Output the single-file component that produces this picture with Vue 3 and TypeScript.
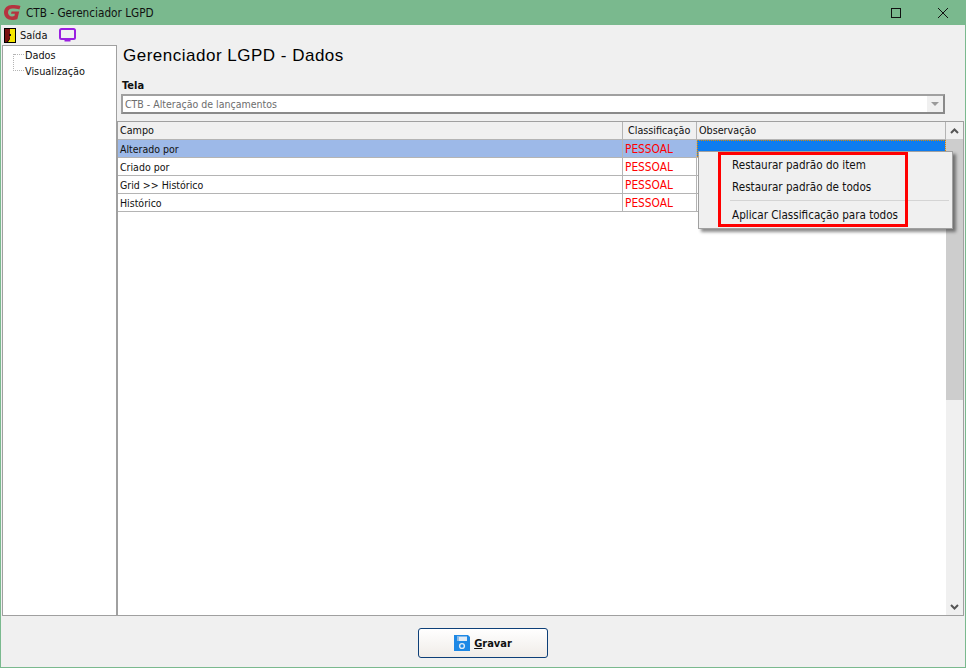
<script setup lang="ts">
const rows = [
  { campo: 'Alterado por', cls: 'PESSOAL', selected: true },
  { campo: 'Criado por', cls: 'PESSOAL', selected: false },
  { campo: 'Grid >> Histórico', cls: 'PESSOAL', selected: false },
  { campo: 'Histórico', cls: 'PESSOAL', selected: false },
]
</script>

<template>
  <div class="window">
    <header class="titlebar">
      <svg class="logo" width="17" height="15" viewBox="0 0 17 15">
        <path d="M16.5 1 C14.5 .4 11 0 8 0 C3.4 0 0 3 0 7.5 C0 12 3.4 15 8 15 C10 15 12 14.6 13.4 14 L15.2 6.4 H7.6 L7 8.8 H10.9 L10.4 11 C9.6 11.3 8.9 11.4 8.2 11.4 C5.6 11.4 4 9.9 4 7.5 C4 5.1 5.8 3.6 8.4 3.6 C10.6 3.6 13.4 4 15.4 4.6 Z" fill="#b5343f" />
      </svg>
      <span class="title">CTB - Gerenciador LGPD</span>
      <div class="winbtns">
        <svg width="12" height="12" viewBox="0 0 12 12"><rect x="1.5" y="1.5" width="9" height="9" fill="none" stroke="#111" /></svg>
        <svg width="14" height="14" viewBox="0 0 14 14"><path d="M2 2 L12 12 M12 2 L2 12" stroke="#111" fill="none" /></svg>
      </div>
    </header>

    <nav class="menubar">
      <svg width="12" height="15" viewBox="0 0 12 15">
        <rect width="12" height="15" fill="#000" />
        <path d="M6 1 H11 V14 H4 L6 11 Z" fill="#f5e500" />
        <path d="M1 1 H6 V10 L3 14 H1 Z" fill="#7a1010" />
        <rect x="5" y="6" width="2" height="2" fill="#111" />
      </svg>
      <span class="saida">Saída</span>
      <svg class="monitor" width="17" height="14" viewBox="0 0 17 14">
        <rect x="1" y="1" width="15" height="10" rx="1.5" fill="none" stroke="#9a1fe0" stroke-width="2" />
        <rect x="5.5" y="11.5" width="6" height="2" fill="#9a1fe0" />
      </svg>
    </nav>

    <div class="body">
      <aside class="tree">
        <div class="tree-item">Dados</div>
        <div class="tree-item">Visualização</div>
        <span class="tree-line"></span>
      </aside>

      <main class="content">
        <h1>Gerenciador LGPD - Dados</h1>
        <label class="field-label">Tela</label>
        <div class="combo">
          <span class="combo-text">CTB - Alteração de lançamentos</span>
          <span class="combo-btn"><i></i></span>
        </div>

        <section class="grid">
          <div class="grid-main">
            <div class="row head">
              <div class="cell c1">Campo</div>
              <div class="cell c2">Classificação</div>
              <div class="cell c3">Observação</div>
            </div>
            <div v-for="r in rows" :key="r.campo" class="row" :class="{ selected: r.selected }">
              <div class="cell c1">{{ r.campo }}</div>
              <div class="cell c2 red">{{ r.cls }}</div>
              <div class="cell c3" :class="{ focus: r.selected }"></div>
            </div>
          </div>
          <div class="scrollbar">
            <div class="arrow-box">
              <svg width="9" height="6" viewBox="0 0 9 6"><path d="M1 5 L4.5 1.5 L8 5" fill="none" stroke="#555" stroke-width="2" /></svg>
            </div>
            <div class="thumb"></div>
            <div class="track"></div>
            <div class="arrow-box">
              <svg width="9" height="6" viewBox="0 0 9 6"><path d="M1 1 L4.5 4.5 L8 1" fill="none" stroke="#555" stroke-width="2" /></svg>
            </div>
          </div>

          <div class="ctx">
            <div class="ctx-item">Restaurar padrão do item</div>
            <div class="ctx-item">Restaurar padrão de todos</div>
            <div class="ctx-sep"></div>
            <div class="ctx-item">Aplicar Classificação para todos</div>
            <div class="redbox"></div>
          </div>
        </section>
      </main>
    </div>

    <footer class="footer">
      <button class="save" type="button">
        <svg width="16" height="16" viewBox="0 0 16 16">
          <path d="M0 0 H14 L16 2 V16 H0 Z" fill="#1e88e5" />
          <rect x="3" y="1.5" width="10" height="4.5" fill="#dfeaf5" />
          <rect x="3" y="1.5" width="2" height="4.5" fill="#8fbce6" />
          <circle cx="8" cy="11" r="2.4" fill="none" stroke="#dfeaf5" stroke-width="1.4" />
        </svg>
        <span><u>G</u>ravar</span>
      </button>
    </footer>
  </div>
</template>

<style>
html, body { margin: 0; background: #fff; }
</style>

<style scoped>
.window {
  width: 966px;
  height: 668px;
  box-sizing: border-box;
  display: flex;
  flex-direction: column;
  background: #f0f0f0;
  border: 1px solid #7ab98e;
  border-top: 0;
  font-family: "DejaVu Sans Condensed", "DejaVu Sans", sans-serif;
  font-stretch: condensed;
  font-size: 10.5px;
  color: #111;
  overflow: hidden;
}
.titlebar {
  height: 25px;
  margin: 0 -1px;
  background: #7ab98e;
  display: flex;
  align-items: center;
  padding-left: 4px;
  flex: none;
}
.title { margin-left: 5px; font-size: 11.7px; color: #111; }
.winbtns {
  margin-left: auto;
  display: flex;
  align-items: center;
  gap: 34px;
  padding-right: 16px;
}
.menubar {
  height: 20px;
  display: flex;
  align-items: center;
  padding-left: 3px;
  flex: none;
}
.saida { margin-left: 4px; font-size: 11px; }
.monitor { margin-left: 12px; }
.body {
  flex: 1;
  display: flex;
  min-height: 0;
  padding-left: 1px;
}
.tree {
  width: 115px;
  height: 571px;
  box-sizing: border-box;
  background: #fff;
  border: 1px solid #a0a0a0;
  padding: 2px 0 0 22px;
  position: relative;
  font-size: 10.8px;
  flex: none;
}
.tree-item { height: 16px; line-height: 15px; }
.tree-line {
  position: absolute;
  left: 10px;
  top: 8px;
  width: 10px;
  height: 16px;
  border-left: 1px dotted #b4b4b4;
  border-bottom: 1px dotted #b4b4b4;
}
.tree-line::before {
  content: "";
  position: absolute;
  left: 0;
  top: 0;
  width: 10px;
  border-top: 1px dotted #b4b4b4;
}
.content {
  flex: 1;
  min-width: 0;
  display: flex;
  flex-direction: column;
}
h1 {
  margin: 0 0 0 6px;
  height: 34px;
  font-size: 17px;
  font-weight: 400;
  line-height: 22px;
  font-family: "Liberation Sans", sans-serif;
  font-stretch: normal;
  letter-spacing: .5px;
  color: #000;
}
.field-label { margin-left: 5px; height: 14px; line-height: 14px; font-weight: 700; font-size: 11px; }
.combo {
  margin: 1px 0 0 4px;
  width: 824px;
  height: 20px;
  box-sizing: border-box;
  display: flex;
  background: #fff;
  border: 2px solid #a0a0a0;
  border-right-color: #8a8a8a;
  border-bottom-color: #8a8a8a;
  flex: none;
}
.combo-text { flex: 1; padding-left: 2px; line-height: 16px; color: #6d6d6d; }
.combo-btn {
  width: 16px;
  background: #f0f0f0;
  display: flex;
  align-items: center;
  justify-content: center;
}
.combo-btn i {
  width: 0;
  height: 0;
  border-left: 4px solid transparent;
  border-right: 4px solid transparent;
  border-top: 4px solid #9a9a9a;
}
.grid {
  margin-top: 7px;
  width: 847px;
  height: 495px;
  box-sizing: border-box;
  background: #fff;
  border: 1px solid #a0a0a0;
  display: flex;
  position: relative;
  flex: none;
}
.grid-main { flex: 1; min-width: 0; }
.row { display: flex; height: 18px; box-sizing: border-box; border-bottom: 1px solid #b4b4b4; }
.row.head { background: #f0f0f0; font-size: 10.7px; }
.row.selected { background: #9db9e8; }
.cell {
  box-sizing: border-box;
  padding-left: 2px;
  line-height: 19px;
  white-space: nowrap;
  overflow: hidden;
}
.head .cell { line-height: 17px; }
.c1 { width: 505px; border-right: 1px solid #b4b4b4; }
.c2 { width: 74px; border-right: 1px solid #b4b4b4; padding-left: 5px; }
.c3 { flex: 1; border-right: 1px solid #b4b4b4; }
.red { color: #f00; padding-left: 2px; font-size: 11.8px; }
.focus { background: #0d7cf0; outline: 1px dotted #e08a00; outline-offset: -1px; }
.scrollbar {
  width: 17px;
  flex: none;
  background: #f0f0f0;
  display: flex;
  flex-direction: column;
}
.arrow-box {
  height: 17px;
  flex: none;
  display: flex;
  align-items: center;
  justify-content: center;
}
.thumb { height: 261px; background: #cdcdcd; flex: none; }
.track { flex: 1; }
.ctx {
  position: absolute;
  left: 580px;
  top: 29px;
  width: 255px;
  height: 78px;
  box-sizing: border-box;
  background: #f0f0f0;
  border: 1px solid #a0a0a0;
  box-shadow: 3px 3px 3px rgba(0, 0, 0, .45);
  padding: 2px 0 0 33px;
}
.ctx-item { height: 22px; line-height: 22px; font-size: 11.6px; white-space: nowrap; }
.ctx-sep { height: 1px; background: #d4d4d4; margin: 2px 3px 3px -2px; }
.redbox {
  position: absolute;
  left: 19px;
  top: 0;
  width: 190px;
  height: 75px;
  box-sizing: border-box;
  border: 3px solid #f00;
}
.footer {
  height: 51px;
  flex: none;
  display: flex;
  justify-content: center;
  align-items: flex-start;
  padding-top: 12px;
  box-sizing: border-box;
}
.save {
  width: 130px;
  height: 30px;
  border: 1px solid #0d3f78;
  border-radius: 3px;
  background: linear-gradient(#ffffff, #f0ece8);
  display: flex;
  align-items: center;
  justify-content: center;
  gap: 4px;
  font-family: inherit;
  font-size: 11px;
  font-weight: 700;
  color: #111;
  padding: 0;
}
</style>
